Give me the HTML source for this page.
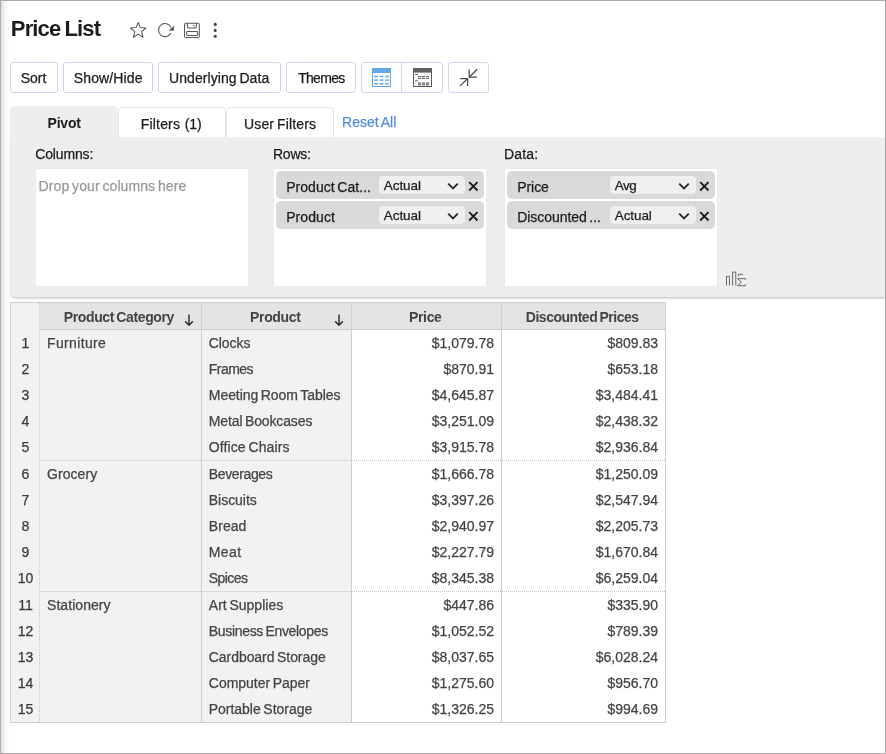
<!DOCTYPE html><html><head><meta charset="utf-8"><title>Price List</title><style>
*{box-sizing:border-box;margin:0;padding:0}
html,body{width:886px;height:754px;overflow:hidden;background:#fff}
body{will-change:transform;font-family:"Liberation Sans",sans-serif;color:#222;position:relative;font-size:14px}
.abs{position:absolute}
.t{position:absolute;white-space:nowrap;line-height:1;font-size:14px;color:#1c1c1c;-webkit-text-stroke:0.25px currentColor;word-spacing:-1.2px}
#frame{position:absolute;left:0;top:0;width:886px;height:754px;border:1px solid #b1aaaa;pointer-events:none;z-index:50}
.btn{position:absolute;top:62px;height:31px;border:1px solid #cfd6f0;border-radius:3px;background:#fff}
.tab{position:absolute;border:1px solid #e6e6e6;border-bottom:none;border-radius:5px 5px 0 0;background:#fff}
.box{position:absolute;top:168px;height:119px;background:#fff;border:1px solid #eaeaea}
.pill{position:absolute;height:28px;background:#d9d9d9;border-radius:5px}
.sel{position:absolute;height:18px;background:#efefef;border-radius:4px}
.c{color:#444}
.b{font-weight:bold;-webkit-text-stroke:0}
</style></head><body>
<div id="frame"></div>
<div class="abs" style="left:1px;top:1px;width:9px;height:752px;background:linear-gradient(90deg,rgba(0,0,0,.13),rgba(0,0,0,.04) 45%,rgba(0,0,0,0));z-index:49"></div>
<div class="t b" id="title" style="left:10.8px;letter-spacing:-0.84px;top:17.5px;font-size:22px">Price List</div>
<svg class="abs" style="left:124px;top:14px" width="100" height="32" viewBox="0 0 100 32"><g fill="none" stroke="#555" stroke-width="1.05" stroke-linejoin="round">
<path d="M14.2 8.4 L16.3 13.6 L21.9 14 L17.6 17.6 L19 23.2 L14.2 20.1 L9.4 23.2 L10.8 17.6 L6.5 14 L12.1 13.6 Z"/>
<path d="M46.84 18.95 A6.5 6.5 0 1 1 46.98 13.56"/>
<rect x="60.5" y="9.3" width="14.8" height="14.2" rx="1.6"/>
<path d="M63.4 9.3 V12.6 Q63.4 14 64.8 14 H71 Q72.4 14 72.4 12.600 V9.3"/>
<rect x="62.7" y="17.4" width="10.9" height="4" rx="0.9"/>
</g>
<path d="M45.3 16.5 L49.7 12.1 L49.8 16.5 Z" fill="#555" stroke="#555" stroke-width="0.4" stroke-linejoin="round"/>
<circle cx="70" cy="11.6" r="0.8" fill="#555"/>
<g fill="#444"><circle cx="91.2" cy="10.4" r="1.55"/><circle cx="91.2" cy="16.4" r="1.55"/><circle cx="91.2" cy="22.2" r="1.55"/></g>
</svg>
<div class="btn" style="left:10px;width:48px"></div>
<div class="t " id="b1" style="left:20.8px;letter-spacing:-0.03px;top:71px;">Sort</div>
<div class="btn" style="left:63px;width:90px"></div>
<div class="t " id="b2" style="left:73.8px;letter-spacing:0.12px;top:71px;">Show/Hide</div>
<div class="btn" style="left:158px;width:123px"></div>
<div class="t " id="b3" style="left:169.0px;letter-spacing:0.07px;top:71px;">Underlying Data</div>
<div class="btn" style="left:286px;width:70px"></div>
<div class="t " id="b4" style="left:298.2px;letter-spacing:-0.71px;top:71px;">Themes</div>
<div class="btn" style="left:361px;width:82px"></div>
<div class="abs" style="left:401px;top:63px;width:1px;height:29px;background:#cfd6f0"></div>
<div class="btn" style="left:448px;width:41px"></div>
<svg class="abs" style="left:372px;top:68px" width="19" height="19" viewBox="0 0 19 19"><rect x="0.5" y="0.5" width="18" height="18" fill="#fff" stroke="#62a7e8" stroke-width="1"/><rect x="0" y="0" width="19" height="5" fill="#62a7e8"/><g fill="#6aaeed"><rect x="2" y="7.7" width="4" height="1.6"/><rect x="7.6" y="7.7" width="3.9" height="1.6"/><rect x="13.1" y="7.7" width="4" height="1.6"/><rect x="2" y="11.3" width="4" height="1.6"/><rect x="7.6" y="11.3" width="3.9" height="1.6"/><rect x="13.1" y="11.3" width="4" height="1.6"/><rect x="2" y="15" width="4" height="1.6"/><rect x="7.6" y="15" width="3.9" height="1.6"/><rect x="13.1" y="15" width="4" height="1.6"/></g></svg>
<svg class="abs" style="left:413px;top:68px" width="19" height="19" viewBox="0 0 19 19"><rect x="0.5" y="0.5" width="18" height="18" fill="#fff" stroke="#5a5a5a" stroke-width="1"/><rect x="0" y="0" width="19" height="4.6" fill="#606060"/><g fill="#6a6a6a"><rect x="2" y="5.9" width="3" height="1.1"/><rect x="5" y="8" width="3.2" height="1.1"/><rect x="9" y="8" width="3.1" height="1.1"/><rect x="13" y="8" width="3" height="1.1"/><rect x="5" y="9.9" width="3.2" height="1.1"/><rect x="9" y="9.9" width="3.1" height="1.1"/><rect x="13" y="9.9" width="3" height="1.1"/><rect x="2" y="12.3" width="3" height="1.1"/></g><g fill="#8a8a8a"><rect x="5" y="14.3" width="3.2" height="3.2"/><rect x="9" y="14.3" width="3.1" height="3.2"/><rect x="13" y="14.3" width="3" height="3.2"/></g></svg>
<svg class="abs" style="left:458px;top:67px" width="22" height="22" viewBox="0 0 22 22"><g fill="none" stroke="#4a4a4a" stroke-width="1.25"><path d="M19.1 2.3 L11.2 10.2"/><path d="M11.2 2.4 V10.2 H19"/><path d="M2.2 18.9 L9.6 11.5"/><path d="M2.2 11.5 H9.6 V18.9"/></g></svg>
<div class="abs" style="left:10px;top:137px;width:876px;height:160px;background:#eeeeee;border-radius:0 0 0 6px;box-shadow:0 2px 3px -1px rgba(0,0,0,.28)"></div>
<div class="abs" style="left:10px;top:106px;width:108px;height:32px;background:#eeeeee;border-radius:5px 5px 0 0"></div>
<div class="tab" style="left:118px;top:107px;width:108px;height:30px"></div>
<div class="tab" style="left:226px;top:107px;width:108px;height:30px"></div>
<div class="t b" id="tb1" style="left:47.6px;letter-spacing:-0.24px;top:116px;">Pivot</div>
<div class="t " id="tb2a" style="left:140.8px;letter-spacing:0.17px;top:117px;">Filters</div>
<div class="t " id="tb2b" style="left:184.8px;letter-spacing:-0.12px;top:117px;">(1)</div>
<div class="t " id="tb3" style="left:244.0px;letter-spacing:0.15px;top:117px;">User Filters</div>
<div class="t " id="tb4" style="left:342.0px;letter-spacing:0.04px;top:115px;color:#548ce0">Reset All</div>
<div class="t " id="l1" style="left:35.2px;letter-spacing:-0.14px;top:147px;">Columns:</div>
<div class="t " id="l2" style="left:273.0px;letter-spacing:-0.25px;top:147px;">Rows:</div>
<div class="t " id="l3" style="left:504.0px;letter-spacing:0.14px;top:147px;">Data:</div>
<div class="box" style="left:35px;width:214px"></div>
<div class="box" style="left:273px;width:214px"></div>
<div class="box" style="left:504px;width:214px"></div>
<div class="t " id="ph" style="left:38.6px;letter-spacing:0.09px;top:179px;color:#999">Drop your columns here</div>
<div class="pill" style="left:276px;top:171px;width:208px"></div>
<div class="sel" style="left:379px;top:176px;width:86px"></div>
<div class="t " id="p1a" style="left:286.2px;letter-spacing:0.03px;top:180px;">Product Cat...</div>
<div class="t " id="p1b" style="left:383.8px;letter-spacing:-0.06px;top:178.5px;font-size:13.5px">Actual</div>
<svg class="abs" style="left:447px;top:181.6px" width="12" height="9" viewBox="0 0 12 9"><path d="M1.2 1.6 L6 6.5 L10.8 1.6" fill="none" stroke="#2a2a2a" stroke-width="1.9"/></svg>
<svg class="abs" style="left:468px;top:181px" width="11" height="11" viewBox="0 0 11 11"><path d="M1.2 1.2 L9.5 9.5 M9.5 1.2 L1.2 9.5" fill="none" stroke="#1a1a1a" stroke-width="1.8"/></svg>
<div class="pill" style="left:276px;top:201px;width:208px"></div>
<div class="sel" style="left:379px;top:206px;width:86px"></div>
<div class="t " id="p2a" style="left:286.2px;letter-spacing:0.07px;top:210px;">Product</div>
<div class="t " id="p2b" style="left:383.8px;letter-spacing:-0.06px;top:208.5px;font-size:13.5px">Actual</div>
<svg class="abs" style="left:447px;top:211.6px" width="12" height="9" viewBox="0 0 12 9"><path d="M1.2 1.6 L6 6.5 L10.8 1.6" fill="none" stroke="#2a2a2a" stroke-width="1.9"/></svg>
<svg class="abs" style="left:468px;top:211px" width="11" height="11" viewBox="0 0 11 11"><path d="M1.2 1.2 L9.5 9.5 M9.5 1.2 L1.2 9.5" fill="none" stroke="#1a1a1a" stroke-width="1.8"/></svg>
<div class="pill" style="left:507px;top:171px;width:208px"></div>
<div class="sel" style="left:610px;top:176px;width:86px"></div>
<div class="t " id="p3a" style="left:517.2px;letter-spacing:-0.05px;top:180px;">Price</div>
<div class="t " id="p3b" style="left:614.8px;letter-spacing:-0.56px;top:178.5px;font-size:13.5px">Avg</div>
<svg class="abs" style="left:678px;top:181.6px" width="12" height="9" viewBox="0 0 12 9"><path d="M1.2 1.6 L6 6.5 L10.8 1.6" fill="none" stroke="#2a2a2a" stroke-width="1.9"/></svg>
<svg class="abs" style="left:699px;top:181px" width="11" height="11" viewBox="0 0 11 11"><path d="M1.2 1.2 L9.5 9.5 M9.5 1.2 L1.2 9.5" fill="none" stroke="#1a1a1a" stroke-width="1.8"/></svg>
<div class="pill" style="left:507px;top:201px;width:208px"></div>
<div class="sel" style="left:610px;top:206px;width:86px"></div>
<div class="t " id="p4a" style="left:517.2px;letter-spacing:-0.05px;top:210px;">Discounted ...</div>
<div class="t " id="p4b" style="left:614.8px;letter-spacing:-0.1px;top:208.5px;font-size:13.5px">Actual</div>
<svg class="abs" style="left:678px;top:211.6px" width="12" height="9" viewBox="0 0 12 9"><path d="M1.2 1.6 L6 6.5 L10.8 1.6" fill="none" stroke="#2a2a2a" stroke-width="1.9"/></svg>
<svg class="abs" style="left:699px;top:211px" width="11" height="11" viewBox="0 0 11 11"><path d="M1.2 1.2 L9.5 9.5 M9.5 1.2 L1.2 9.5" fill="none" stroke="#1a1a1a" stroke-width="1.8"/></svg>
<svg class="abs" style="left:720px;top:264px" width="32" height="28" viewBox="0 0 32 28"><g fill="none" stroke="#666" stroke-width="1"><path d="M6.5 21.4 V12.4 H9.5 V21.4"/><path d="M12.6 21.4 V8.1 H15.8 V21.4"/><path d="M25.5 15.8 V14.6 H17.6 L21.4 18.2 L17.6 21.7 H25.5 V20.4"/><path d="M18.6 12.2 V10.2 H22.4 V11.2"/></g></svg>
<div class="abs" style="left:10px;top:302px;width:656px;height:421px;background:#f2f2f2;border:1px solid #cdcdcd"></div>
<div class="abs" style="left:40px;top:303px;width:625px;height:26px;background:#e4e4e4"></div>
<div class="abs" style="left:40px;top:329px;width:625px;height:1px;background:#cdcdcd"></div>
<div class="abs" style="left:352px;top:330px;width:313px;height:392px;background:#fff"></div>
<div class="abs" style="left:39px;top:303px;width:0;height:419px;border-left:1px dotted #c6c6c6"></div>
<div class="abs" style="left:201px;top:303px;width:1px;height:419px;background:#cfcfcf"></div>
<div class="abs" style="left:351px;top:303px;width:1px;height:419px;background:#cfcfcf"></div>
<div class="abs" style="left:501px;top:303px;width:1px;height:419px;background:#cfcfcf"></div>
<div class="abs" style="left:40px;top:460px;width:625px;height:0;border-top:1px dotted #c4c4c4"></div>
<div class="abs" style="left:40px;top:591px;width:625px;height:0;border-top:1px dotted #c4c4c4"></div>
<div class="t c b" id="h1" style="left:63.8px;letter-spacing:-0.38px;top:310px;">Product Category</div>
<div class="t c b" id="h2" style="left:250.0px;letter-spacing:-0.33px;top:310px;">Product</div>
<div class="t c b" id="h3" style="left:409.0px;letter-spacing:-0.35px;top:310px;">Price</div>
<div class="t c b" id="h4" style="left:525.8px;letter-spacing:-0.48px;top:310px;">Discounted Prices</div>
<svg class="abs" style="left:184.3px;top:314px" width="10" height="13" viewBox="0 0 10 13"><path d="M5 0.6 V11 M1.2 7.4 L5 11.2 L8.8 7.4" fill="none" stroke="#333" stroke-width="1.5"/></svg>
<svg class="abs" style="left:334.3px;top:314px" width="10" height="13" viewBox="0 0 10 13"><path d="M5 0.6 V11 M1.2 7.4 L5 11.2 L8.8 7.4" fill="none" stroke="#333" stroke-width="1.5"/></svg>
<div class="t" id="n0" style="left:11px;width:29px;text-align:center;top:336px;color:#3a3a3a">1</div>
<div class="t c" id="c0" style="left:47.0px;letter-spacing:0.36px;top:336px;">Furniture</div>
<div class="t c" id="p0" style="left:208.8px;letter-spacing:-0.08px;top:336px;">Clocks</div>
<div class="t c" id="a0" style="right:392px;top:336px">$1,079.78</div>
<div class="t c" id="d0" style="right:228px;top:336px">$809.83</div>
<div class="t" id="n1" style="left:11px;width:29px;text-align:center;top:362px;color:#3a3a3a">2</div>
<div class="t c" id="p1" style="left:208.8px;letter-spacing:-0.53px;top:362px;">Frames</div>
<div class="t c" id="a1" style="right:392px;top:362px">$870.91</div>
<div class="t c" id="d1" style="right:228px;top:362px">$653.18</div>
<div class="t" id="n2" style="left:11px;width:29px;text-align:center;top:388px;color:#3a3a3a">3</div>
<div class="t c" id="p2" style="left:208.8px;letter-spacing:-0.06px;top:388px;">Meeting Room Tables</div>
<div class="t c" id="a2" style="right:392px;top:388px">$4,645.87</div>
<div class="t c" id="d2" style="right:228px;top:388px">$3,484.41</div>
<div class="t" id="n3" style="left:11px;width:29px;text-align:center;top:414px;color:#3a3a3a">4</div>
<div class="t c" id="p3" style="left:208.8px;letter-spacing:-0.13px;top:414px;">Metal Bookcases</div>
<div class="t c" id="a3" style="right:392px;top:414px">$3,251.09</div>
<div class="t c" id="d3" style="right:228px;top:414px">$2,438.32</div>
<div class="t" id="n4" style="left:11px;width:29px;text-align:center;top:440px;color:#3a3a3a">5</div>
<div class="t c" id="p4" style="left:208.8px;letter-spacing:0.1px;top:440px;">Office Chairs</div>
<div class="t c" id="a4" style="right:392px;top:440px">$3,915.78</div>
<div class="t c" id="d4" style="right:228px;top:440px">$2,936.84</div>
<div class="t" id="n5" style="left:11px;width:29px;text-align:center;top:467px;color:#3a3a3a">6</div>
<div class="t c" id="c5" style="left:47.0px;letter-spacing:0.06px;top:467px;">Grocery</div>
<div class="t c" id="p5" style="left:208.8px;letter-spacing:-0.37px;top:467px;">Beverages</div>
<div class="t c" id="a5" style="right:392px;top:467px">$1,666.78</div>
<div class="t c" id="d5" style="right:228px;top:467px">$1,250.09</div>
<div class="t" id="n6" style="left:11px;width:29px;text-align:center;top:493px;color:#3a3a3a">7</div>
<div class="t c" id="p6" style="left:208.8px;letter-spacing:-0.04px;top:493px;">Biscuits</div>
<div class="t c" id="a6" style="right:392px;top:493px">$3,397.26</div>
<div class="t c" id="d6" style="right:228px;top:493px">$2,547.94</div>
<div class="t" id="n7" style="left:11px;width:29px;text-align:center;top:519px;color:#3a3a3a">8</div>
<div class="t c" id="p7" style="left:208.8px;letter-spacing:0.05px;top:519px;">Bread</div>
<div class="t c" id="a7" style="right:392px;top:519px">$2,940.97</div>
<div class="t c" id="d7" style="right:228px;top:519px">$2,205.73</div>
<div class="t" id="n8" style="left:11px;width:29px;text-align:center;top:545px;color:#3a3a3a">9</div>
<div class="t c" id="p8" style="left:208.8px;letter-spacing:0.4px;top:545px;">Meat</div>
<div class="t c" id="a8" style="right:392px;top:545px">$2,227.79</div>
<div class="t c" id="d8" style="right:228px;top:545px">$1,670.84</div>
<div class="t" id="n9" style="left:11px;width:29px;text-align:center;top:571px;color:#3a3a3a">10</div>
<div class="t c" id="p9" style="left:208.8px;letter-spacing:-0.56px;top:571px;">Spices</div>
<div class="t c" id="a9" style="right:392px;top:571px">$8,345.38</div>
<div class="t c" id="d9" style="right:228px;top:571px">$6,259.04</div>
<div class="t" id="n10" style="left:11px;width:29px;text-align:center;top:598px;color:#3a3a3a">11</div>
<div class="t c" id="c10" style="left:47.0px;letter-spacing:0.06px;top:598px;">Stationery</div>
<div class="t c" id="p10" style="left:208.8px;letter-spacing:0.01px;top:598px;">Art Supplies</div>
<div class="t c" id="a10" style="right:392px;top:598px">$447.86</div>
<div class="t c" id="d10" style="right:228px;top:598px">$335.90</div>
<div class="t" id="n11" style="left:11px;width:29px;text-align:center;top:624px;color:#3a3a3a">12</div>
<div class="t c" id="p11" style="left:208.8px;letter-spacing:-0.32px;top:624px;">Business Envelopes</div>
<div class="t c" id="a11" style="right:392px;top:624px">$1,052.52</div>
<div class="t c" id="d11" style="right:228px;top:624px">$789.39</div>
<div class="t" id="n12" style="left:11px;width:29px;text-align:center;top:650px;color:#3a3a3a">13</div>
<div class="t c" id="p12" style="left:208.8px;letter-spacing:-0.06px;top:650px;">Cardboard Storage</div>
<div class="t c" id="a12" style="right:392px;top:650px">$8,037.65</div>
<div class="t c" id="d12" style="right:228px;top:650px">$6,028.24</div>
<div class="t" id="n13" style="left:11px;width:29px;text-align:center;top:676px;color:#3a3a3a">14</div>
<div class="t c" id="p13" style="left:208.8px;letter-spacing:-0.03px;top:676px;">Computer Paper</div>
<div class="t c" id="a13" style="right:392px;top:676px">$1,275.60</div>
<div class="t c" id="d13" style="right:228px;top:676px">$956.70</div>
<div class="t" id="n14" style="left:11px;width:29px;text-align:center;top:702px;color:#3a3a3a">15</div>
<div class="t c" id="p14" style="left:208.8px;letter-spacing:-0.03px;top:702px;">Portable Storage</div>
<div class="t c" id="a14" style="right:392px;top:702px">$1,326.25</div>
<div class="t c" id="d14" style="right:228px;top:702px">$994.69</div>
</body></html>
